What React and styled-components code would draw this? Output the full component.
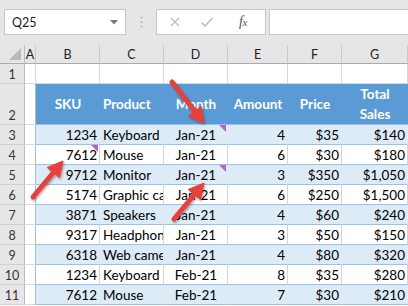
import React from 'react';
import styled, { createGlobalStyle } from 'styled-components';

const GlobalStyle = createGlobalStyle`
  html, body {
    margin: 0;
    padding: 0;
    background: #ffffff;
  }
  body {
    font-family: Lato, "Liberation Sans", sans-serif;
    overflow: hidden;
  }
`;

// Sheet data.
const COLUMNS = ['A', 'B', 'C', 'D', 'E', 'F', 'G'];
const HEADERS = [
  { label: 'SKU', align: 'center' },
  { label: 'Product', align: 'left' },
  { label: 'Month', align: 'center' },
  { label: 'Amount', align: 'center' },
  { label: 'Price', align: 'center' },
  { label: 'Total Sales', align: 'center' },
];
const ALIGNS = ['right', 'left', 'center', 'right', 'right', 'right'];
const ROWS = [
  ['1234', 'Keyboard', 'Jan-21', '4', '$35', '$140'],
  ['7612', 'Mouse', 'Jan-21', '6', '$30', '$180'],
  ['9712', 'Monitor', 'Jan-21', '3', '$350', '$1,050'],
  ['5174', 'Graphic card', 'Jan-21', '6', '$250', '$1,500'],
  ['3871', 'Speakers', 'Jan-21', '4', '$60', '$240'],
  ['9317', 'Headphones', 'Jan-21', '3', '$50', '$150'],
  ['6318', 'Web camera', 'Jan-21', '4', '$80', '$320'],
  ['1234', 'Keyboard', 'Feb-21', '8', '$35', '$280'],
  ['7612', 'Mouse', 'Feb-21', '7', '$30', '$210'],
];
// Cells with a comment marker: "row number-data column index".
const COMMENTS = ['4-0', '3-2', '5-2'];

const ARROWS = [
  { from: [172, 82], to: [204, 123] },
  { from: [33, 197], to: [63, 161] },
  { from: [174, 219], to: [204, 183] },
];

// Styled components.
const Frame = styled.div`
  position: relative;
  width: 408px;
  height: 306px;
  overflow: hidden;
  background: #ffffff;
`;

const FormulaBar = styled.div`
  display: flex;
  align-items: flex-start;
  height: 45px;
  box-sizing: border-box;
  padding: 9px 0 0 4px;
  background: #e6e6e6;
`;

const NameBox = styled.div`
  display: flex;
  align-items: center;
  justify-content: space-between;
  width: 122px;
  height: 26px;
  box-sizing: border-box;
  padding: 0 7px 0 7px;
  background: #ffffff;
  border: 1px solid #c6c6c6;
  font-size: 12.5px;
  color: #222222;
`;

const Grip = styled.div`
  display: flex;
  align-items: center;
  justify-content: center;
  width: 30px;
  height: 26px;
`;

const FxGroup = styled.div`
  display: flex;
  align-items: center;
  width: 110px;
  height: 26px;
  box-sizing: border-box;
  background: #ffffff;
  border: 1px solid #c6c6c6;
  padding-left: 12px;
  gap: 19px;
`;

const FxLabel = styled.span`
  margin-left: 6px;
  font-family: "Liberation Serif", serif;
  font-style: italic;
  font-size: 14px;
  color: #555555;
  letter-spacing: -0.5px;

  small {
    font-size: 11px;
  }
`;

const FormulaInput = styled.div`
  flex: 1;
  height: 26px;
  margin-left: 3px;
  box-sizing: border-box;
  background: #ffffff;
  border: 1px solid #c6c6c6;
  border-right: none;
`;

const Sheet = styled.div`
  display: grid;
  grid-template-columns: 25px 11px 64px 64px 64px 60px 54px 66px;
  grid-template-rows: 19px 20px 41px repeat(9, 20px);
  font-size: 13.5px;
  color: #000000;
`;

const Corner = styled.div`
  position: relative;
  background: #e6e6e6;
  border-right: 1px solid #bdbdbd;
  border-bottom: 1px solid #ababab;
`;

const CornerMark = styled.div`
  position: absolute;
  right: 3px;
  bottom: 3px;
  width: 0;
  height: 0;
  border-left: 12px solid transparent;
  border-bottom: 12px solid #b9b9b9;
`;

const ColHead = styled.div`
  display: flex;
  align-items: center;
  justify-content: center;
  box-sizing: border-box;
  background: #e6e6e6;
  border-right: 1px solid #cbcbcb;
  border-bottom: 1px solid #ababab;
  font-size: 12.5px;
  color: #222222;
`;

const RowHead = styled.div`
  display: flex;
  align-items: flex-end;
  justify-content: center;
  padding-bottom: 1px;
  box-sizing: border-box;
  background: #e6e6e6;
  border-right: 1px solid #bdbdbd;
  border-bottom: 1px solid #d0d0d0;
  font-size: 12.5px;
  color: #333333;
`;

const Blank = styled.div`
  box-sizing: border-box;
  border-right: 1px solid ${(p) => (p.$edge ? '#9bc2e6' : '#d9d9d9')};
  border-bottom: 1px solid #d9d9d9;
`;

const HeadCell = styled.div`
  display: flex;
  align-items: center;
  justify-content: ${(p) => (p.$align === 'left' ? 'flex-start' : 'center')};
  padding: 0 3px;
  box-sizing: border-box;
  background: #5b9bd5;
  border-bottom: 1px solid #9bc2e6;
  color: #ffffff;
  font-weight: 700;
  line-height: 20px;
  text-align: center;
`;

const justify = { left: 'flex-start', center: 'center', right: 'flex-end' };

const DataCell = styled.div`
  position: relative;
  display: flex;
  align-items: center;
  justify-content: ${(p) => justify[p.$align]};
  padding: 1px 2px 0 3px;
  box-sizing: border-box;
  overflow: hidden;
  white-space: nowrap;
  background: ${(p) => (p.$band ? '#ddebf7' : '#ffffff')};
  border-right: 1px solid ${(p) => (p.$band ? '#ddebf7' : '#d4d4d4')};
  border-bottom: 1px solid #9bc2e6;
`;

const CommentMark = styled.span`
  position: absolute;
  top: 0;
  right: 1px;
  width: 0;
  height: 0;
  border-left: 7px solid transparent;
  border-top: 7px solid #b563cc;
`;

const Overlay = styled.svg`
  position: absolute;
  top: 0;
  left: 0;
  pointer-events: none;
`;

const Arrow = ({ from, to }) => {
  const dx = to[0] - from[0];
  const dy = to[1] - from[1];
  const len = Math.hypot(dx, dy);
  const ux = dx / len;
  const uy = dy / len;
  const head = 15;
  const half = 8;
  const bx = to[0] - ux * head;
  const by = to[1] - uy * head;
  const pts = [
    `${to[0]},${to[1]}`,
    `${bx - uy * half},${by + ux * half}`,
    `${bx + uy * half},${by - ux * half}`,
  ].join(' ');
  return (
    <g filter="url(#arrowShadow)">
      <line
        x1={from[0]}
        y1={from[1]}
        x2={bx + ux * 2}
        y2={by + uy * 2}
        stroke="#e8403c"
        strokeWidth="5"
        strokeLinecap="round"
      />
      <polygon points={pts} fill="#e8403c" stroke="#e8403c" strokeWidth="1" strokeLinejoin="round" />
    </g>
  );
};

const App = () => (
  <Frame>
    <GlobalStyle />
    <FormulaBar>
      <NameBox>
        <span>Q25</span>
        <svg width="8" height="5" viewBox="0 0 8 5">
          <polygon points="0,0 8,0 4,4.5" fill="#777777" />
        </svg>
      </NameBox>
      <Grip>
        <svg width="3" height="12" viewBox="0 0 3 12">
          <circle cx="1.5" cy="1.5" r="1" fill="#b5b5b5" />
          <circle cx="1.5" cy="6" r="1" fill="#b5b5b5" />
          <circle cx="1.5" cy="10.5" r="1" fill="#b5b5b5" />
        </svg>
      </Grip>
      <FxGroup>
        <svg width="12" height="12" viewBox="0 0 12 12">
          <path d="M2 2 L10 10 M10 2 L2 10" stroke="#bdbdbd" strokeWidth="1.3" />
        </svg>
        <svg width="14" height="12" viewBox="0 0 14 12">
          <path d="M1.5 6.5 L5 10 L12.5 2" stroke="#bdbdbd" strokeWidth="1.6" fill="none" />
        </svg>
        <FxLabel>f<small>x</small></FxLabel>
      </FxGroup>
      <FormulaInput />
    </FormulaBar>

    <Sheet>
      <Corner><CornerMark /></Corner>
      {COLUMNS.map((c) => <ColHead key={c}>{c}</ColHead>)}

      <RowHead>1</RowHead>
      {COLUMNS.map((c) => <Blank key={`1${c}`} />)}

      <RowHead>2</RowHead>
      <Blank $edge />
      {HEADERS.map((h) => (
        <HeadCell key={h.label} $align={h.align}>{h.label}</HeadCell>
      ))}

      {ROWS.map((row, i) => {
        const n = i + 3;
        const band = n % 2 === 1;
        return (
          <React.Fragment key={n}>
            <RowHead>{n}</RowHead>
            <Blank $edge />
            {row.map((value, j) => (
              <DataCell key={`${n}-${j}`} $band={band} $align={ALIGNS[j]}>
                {value}
                {COMMENTS.includes(`${n}-${j}`) && <CommentMark />}
              </DataCell>
            ))}
          </React.Fragment>
        );
      })}
    </Sheet>

    <Overlay width="408" height="306" viewBox="0 0 408 306">
      <defs>
        <filter id="arrowShadow" x="-30%" y="-30%" width="160%" height="160%">
          <feDropShadow dx="1" dy="1.5" stdDeviation="1" floodColor="#000000" floodOpacity="0.35" />
        </filter>
      </defs>
      {ARROWS.map((a) => <Arrow key={a.from.join('-')} from={a.from} to={a.to} />)}
    </Overlay>
  </Frame>
);

export default App;
